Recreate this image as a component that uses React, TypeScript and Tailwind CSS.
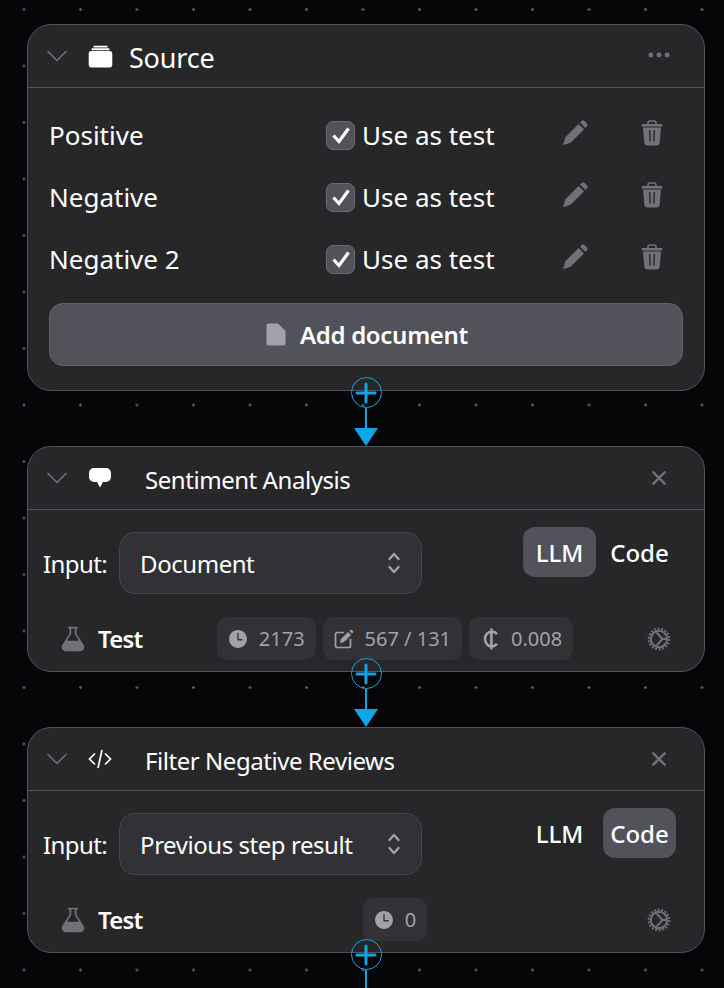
import type { ReactNode } from 'react';
import { IoAlbums, IoClose, IoEllipsisHorizontal, IoFlask, IoTime } from 'react-icons/io5';

const docs = ['Positive', 'Negative', 'Negative 2'];

function Gear() {
  return (
    <svg viewBox="0 0 24 24" className="w-[24px] h-[24px] text-[#71717a]" fill="none" stroke="currentColor">
      <circle cx="12" cy="12" r="10.3" strokeWidth="2" strokeDasharray="2 1.6" />
      <circle cx="12" cy="12" r="8.2" strokeWidth="2" />
      <path d="M9.6 5.5 L15.5 12 L9.6 18.5 M15.5 12 H20" strokeWidth="2" />
    </svg>
  );
}

function SpeechBubble() {
  return (
    <svg viewBox="0 0 22 20" className="w-[22px] h-[20px]" fill="white">
      <path d="M5 0 H17 A5 5 0 0 1 22 5 V9 A5 5 0 0 1 17 14 H14 L11 19.5 L8 14 H5 A5 5 0 0 1 0 9 V5 A5 5 0 0 1 5 0 Z" />
    </svg>
  );
}

function CodeGlyph() {
  return (
    <svg viewBox="0 0 24 20" className="w-[24px] h-[20px]" fill="none" stroke="white" strokeWidth="1.7">
      <path d="M7 4.5 L1.5 10 L7 15.5 M17 4.5 L22.5 10 L17 15.5 M14 1 L10 19" />
    </svg>
  );
}

function Chevron() {
  return (
    <svg viewBox="0 0 20 12" className="w-[20px] h-[12px] shrink-0" fill="none" stroke="#71717a" strokeWidth="1.5">
      <path d="M0.5 1 L10 10.5 L19.5 1" />
    </svg>
  );
}

function Pencil() {
  return (
    <svg viewBox="0 0 26 26" className="w-[26px] h-[26px] -mt-[4px] text-[#71717a]" fill="currentColor">
      <path d="M1 25 L3.4 17.2 L16.6 4 L22 9.4 L8.8 22.6 Q5 24.3 1 25 Z" />
      <path d="M18 2.6 L19.4 1.2 A2.4 2.4 0 0 1 22.8 1.2 L24.8 3.2 A2.4 2.4 0 0 1 24.8 6.6 L23.4 8 Z" />
    </svg>
  );
}

function Trash() {
  return (
    <svg viewBox="0 0 22 26" className="w-[22px] h-[26px] -mt-[4px] text-[#71717a]" fill="currentColor">
      <path d="M7 4 V3 Q7 1 9 1 H13 Q15 1 15 3 V4" fill="none" stroke="currentColor" strokeWidth="1.6" />
      <rect x="0.5" y="4" width="21" height="2.4" rx="1.2" />
      <path fillRule="evenodd" d="M2 7.4 H20 L18.6 23 Q18.4 25.4 16 25.4 H6 Q3.6 25.4 3.4 23 Z M8 10 L8.4 21.5 H9.8 L9.4 10 Z M12.6 10 L12.2 21.5 H13.6 L14 10 Z" />
    </svg>
  );
}

function Sheet() {
  return (
    <svg viewBox="0 0 20 23" className="w-[20px] h-[23px]" fill="#a1a1aa">
      <path d="M2.5 0.5 H12 L19.5 8 V20 A2.5 2.5 0 0 1 17 22.5 H2.5 A2 2 0 0 1 0.5 20.5 V2.5 A2 2 0 0 1 2.5 0.5 Z" />
    </svg>
  );
}

function Check() {
  return (
    <svg viewBox="0 0 20 20" className="w-[20px] h-[20px]" fill="none" stroke="white" strokeWidth="3.2">
      <path d="M2.5 10.5 L8 16.5 L17.5 3.5" />
    </svg>
  );
}

function Cedi() {
  return (
    <svg viewBox="0 0 20 24" className="w-[20px] h-[24px]" fill="none" stroke="#a1a1aa" strokeWidth="2.6">
      <path d="M17 7.2 C15.6 5.4 13.8 4.6 12 4.6 C8 4.6 5 7.8 5 12 C5 16.2 8 19.4 12 19.4 C13.8 19.4 15.6 18.6 17 16.8" />
      <path d="M11.4 1.5 V22.5" />
    </svg>
  );
}

function EditNote() {
  return (
    <svg viewBox="0 0 20 20" className="w-[20px] h-[20px]" fill="none" stroke="#a1a1aa">
      <path d="M10 3.5 H3.5 A2 2 0 0 0 1.5 5.5 V16.5 A2 2 0 0 0 3.5 18.5 H14.5 A2 2 0 0 0 16.5 16.5 V10" strokeWidth="1.7" />
      <path d="M6.5 13.5 L7.5 10 L14 3.5 L16.5 6 L10 12.5 Z" fill="#a1a1aa" strokeWidth="1" />
      <path d="M15.4 2 L16.4 1 A1.2 1.2 0 0 1 18 1 L19 2 A1.2 1.2 0 0 1 19 3.6 L18 4.6 Z" fill="#a1a1aa" stroke="none" />
    </svg>
  );
}

function UpDown() {
  return (
    <svg viewBox="0 0 14 24" className="w-[14px] h-[24px]" fill="none" stroke="#a1a1aa" strokeWidth="2.4" strokeLinecap="round" strokeLinejoin="round">
      <path d="M2.5 8 L7 3 L11.5 8 M2.5 16 L7 21 L11.5 16" />
    </svg>
  );
}

function CardHeader({ icon, title, action, big }: { icon: ReactNode; title: string; action: ReactNode; big?: boolean }) {
  return (
    <div className="flex items-center border-b border-[#52525b] pl-[19px] pr-[32px] h-[63px]">
      <Chevron />
      <div className="w-[24px] ml-[21px] flex justify-center shrink-0">{icon}</div>
      <div className={big ? 'ml-[17px] mt-[4px] text-[27px] tracking-[-0.2px] text-white' : 'ml-[33px] mt-[3px] text-[24px] tracking-[-0.45px] text-white'}>{title}</div>
      <div className="ml-auto flex items-center text-[#71717a]">{action}</div>
    </div>
  );
}

function Chip({ icon, text }: { icon: ReactNode; text: string }) {
  return (
    <div className="flex items-center gap-[11px] h-[43px] px-[11px] rounded-[10px] bg-[#323236] text-[20px] text-[#a1a1aa]">
      {icon}
      <span>{text}</span>
    </div>
  );
}

function StepBody({ input, mode, stats }: { input: string; mode: 'LLM' | 'Code'; stats: ReactNode }) {
  return (
    <div className="h-[161px] flex flex-col">
      <div className="flex items-start pl-[15px] pt-[17px]">
        <div className="flex items-center gap-[12px] mt-[5px]">
          <span className="pt-[2px] text-[24px] tracking-[-0.6px] text-white">Input:</span>
          <div className="w-[303px] h-[62px] flex items-center justify-between pl-[20px] pr-[20px] rounded-[16px] border border-[#45454b] bg-[#323236]">
            <span className="pt-[2px] text-[24px] tracking-[-0.45px] text-white">{input}</span>
            <UpDown />
          </div>
        </div>
        <div className="ml-auto mr-[28px] flex items-center gap-[7px] font-medium text-[24px] text-white">
          <div className={`h-[50px] w-[73px] pt-[2px] flex items-center justify-center rounded-[12px] ${mode === 'LLM' ? 'bg-[#52525b]' : ''}`}>LLM</div>
          <div className={`h-[50px] w-[73px] pt-[2px] flex items-center justify-center rounded-[12px] ${mode === 'Code' ? 'bg-[#52525b]' : ''}`}>Code</div>
        </div>
      </div>
      <div className="flex items-center mt-auto mb-[11px]">
        <div className="w-[170px] flex items-center gap-[11px] pl-[31px] shrink-0">
          <IoFlask className="w-[28px] h-[28px] text-[#71717a]" />
          <span className="text-[24px] font-semibold tracking-[-0.8px] text-white">Test</span>
        </div>
        <div className="flex-1 flex justify-center gap-[7px]">{stats}</div>
        <div className="w-[112px] flex justify-end pr-[33px] shrink-0">
          <Gear />
        </div>
      </div>
    </div>
  );
}

function Connector({ arrow = true }: { arrow?: boolean }) {
  return (
    <div className="relative z-10 h-[55px] flex flex-col items-center">
      <div className="w-[31px] h-[31px] -mt-[14px] rounded-full border border-[#0ea5e9] flex items-center justify-center shrink-0">
        <svg viewBox="0 0 22 22" className="w-[22px] h-[22px]" stroke="#0ea5e9" strokeWidth="3" strokeLinecap="round">
          <path d="M11 2 V20 M2 11 H20" />
        </svg>
      </div>
      <div className="w-[2px] flex-1 bg-[#0ea5e9]" />
      {arrow && (
        <svg viewBox="0 0 24 18" className="w-[24px] h-[18px] shrink-0" fill="#0ea5e9">
          <path d="M0 0 H24 L12 18 Z" />
        </svg>
      )}
    </div>
  );
}

const clock = <IoTime className="w-[22px] h-[22px] -mx-[1px] text-[#a1a1aa]" />;

export default function App() {
  return (
    <div className="w-[724px] h-[988px] overflow-hidden bg-[#060609] bg-[radial-gradient(circle,#5b5b68_1px,transparent_1.6px)] bg-[size:56.5px_56.5px] bg-[position:-4.25px_-18.75px] pt-[24px] pl-[27px] font-['Noto_Sans',sans-serif]">
      <div className="w-[678px]">
        <div className="h-[367px] rounded-[24px] border border-[#52525b] bg-[#27272a]">
          <CardHeader
            big
            icon={<IoAlbums className="w-[29px] h-[29px] text-white shrink-0" />}
            title="Source"
            action={<IoEllipsisHorizontal className="w-[26px] h-[26px] -mt-[3px]" />}
          />
          <div className="flex flex-col pt-[16px]">
            {docs.map((d) => (
              <div key={d} className="h-[62px] grid grid-cols-[277px_236px_79px_auto] items-center pl-[21px]">
                <span className="text-[26px] text-white">{d}</span>
                <div className="flex items-center gap-[7px]">
                  <div className="w-[29px] h-[29px] rounded-[7px] bg-[#52525b] border border-[#6b6b73] flex items-center justify-center">
                    <Check />
                  </div>
                  <span className="text-[26px] text-white">Use as test</span>
                </div>
                <Pencil />
                <Trash />
              </div>
            ))}
            <div className="mx-[21px] mt-[13px] h-[63px] rounded-[14px] border border-[#63636b] bg-[#52525b] flex items-center justify-center gap-[14px] pl-[2px]">
              <Sheet />
              <span className="text-[24px] font-semibold tracking-[-0.3px] text-white">Add document</span>
            </div>
          </div>
        </div>
        <Connector />
        <div className="h-[226px] rounded-[24px] border border-[#52525b] bg-[#27272a]">
          <CardHeader
            icon={<SpeechBubble />}
            title="Sentiment Analysis"
            action={<IoClose className="w-[26px] h-[26px]" />}
          />
          <StepBody
            input="Document"
            mode="LLM"
            stats={
              <>
                <Chip icon={clock} text="2173" />
                <Chip icon={<EditNote />} text="567 / 131" />
                <Chip icon={<Cedi />} text="0.008" />
              </>
            }
          />
        </div>
        <Connector />
        <div className="h-[226px] rounded-[24px] border border-[#52525b] bg-[#27272a]">
          <CardHeader
            icon={<CodeGlyph />}
            title="Filter Negative Reviews"
            action={<IoClose className="w-[26px] h-[26px]" />}
          />
          <StepBody input="Previous step result" mode="Code" stats={<Chip icon={clock} text="0" />} />
        </div>
        <Connector arrow={false} />
      </div>
    </div>
  );
}
